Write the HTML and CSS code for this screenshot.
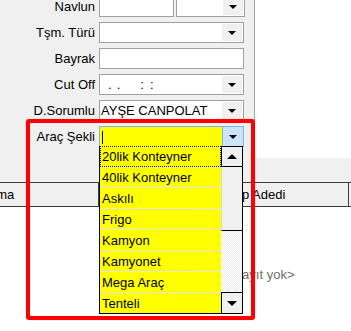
FILE: index.html
```html
<!DOCTYPE html>
<html lang="tr">
<head>
    <meta charset="UTF-8">
    <meta name="viewport" content="width=device-width, initial-scale=1.0">
    <title>Araç Şekli</title>
    <link rel="stylesheet" href="styles.css">
</head>
<body>
    <div class="top">
        <div class="panel">
            <div class="form">
                <div class="row">
                    <label>Navlun</label>
                    <div class="box box-short"></div>
                    <div class="box combo combo-short">
                        <span class="val"></span>
                        <span class="btn"><span class="arrow"></span></span>
                    </div>
                </div>

                <div class="row">
                    <label>Tşm. Türü</label>
                    <div class="box combo">
                        <span class="val"></span>
                        <span class="btn"><span class="arrow"></span></span>
                    </div>
                </div>

                <div class="row">
                    <label>Bayrak</label>
                    <div class="box box-wide"></div>
                </div>

                <div class="row">
                    <label>Cut Off</label>
                    <div class="box combo">
                        <span class="val mask"><span class="m1">.</span><span class="m2">.</span><span class="m3">:</span><span class="m4">:</span></span>
                        <span class="btn"><span class="arrow"></span></span>
                    </div>
                </div>

                <div class="row">
                    <label>D.Sorumlu</label>
                    <div class="box combo">
                        <span class="val">AYŞE CANPOLAT</span>
                        <span class="btn"><span class="arrow"></span></span>
                    </div>
                </div>

                <div class="row">
                    <label>Araç Şekli</label>
                    <div class="box combo combo-active">
                        <span class="val"><span class="caret"></span></span>
                        <span class="btn"><span class="arrow"></span></span>

                        <div class="dropdown">
                            <ul class="items">
                                <li class="focused">20lik Konteyner</li>
                                <li>40lik Konteyner</li>
                                <li>Askılı</li>
                                <li>Frigo</li>
                                <li>Kamyon</li>
                                <li>Kamyonet</li>
                                <li>Mega Araç</li>
                                <li>Tenteli</li>
                            </ul>
                            <div class="scrollbar">
                                <div class="sb-btn sb-up"><span class="arrow-up"></span></div>
                                <div class="sb-thumb"></div>
                                <div class="sb-track"></div>
                                <div class="sb-btn sb-down"><span class="arrow-dn"></span></div>
                            </div>
                        </div>
                    </div>
                </div>
            </div>
        </div>
        <div class="side"></div>
    </div>

    <div class="strip"></div>

    <div class="grid">
        <div class="grid-head">
            <div class="cell c1">Firma</div>
            <div class="cell c2"></div>
            <div class="cell c3">Kap Adedi</div>
            <div class="cell c4"></div>
        </div>
        <div class="grid-body">
            <span class="empty">&lt;kayıt yok&gt;</span>
        </div>
    </div>

    <div class="highlight"></div>
</body>
</html>
```

FILE: styles.css
```css
:root {
    --panel-bg: #f0f0f0;
    --field-border: #a0a0a0;
    --focus-border: #7eb4ea;
    --focus-btn: #cce4f7;
    --yellow: #ffff00;
}

* {
    box-sizing: border-box;
}

body {
    margin: 0;
    width: 351px;
    height: 331px;
    overflow: hidden;
    position: relative;
    background-color: #ffffff;
    color: #000000;
    font-family: "Liberation Sans", Arial, sans-serif;
    font-size: 13px;
}

/* top form area */
.top {
    display: flex;
    height: 158px;
}

.panel {
    width: 255px;
    background-color: var(--panel-bg);
    border-right: 1px solid #a3a3a3;
}

.side {
    flex: 1;
    background-color: #ffffff;
}

.form {
    display: flex;
    flex-direction: column;
    gap: 5px;
    margin-top: -4px;
}

.row {
    display: flex;
    align-items: center;
    gap: 4px;
    height: 21px;
}

label {
    width: 95px;
    text-align: right;
}

.box {
    height: 21px;
    border: 1px solid var(--field-border);
    background-color: #ffffff;
}

.box-short {
    width: 75px;
}

.box-wide {
    width: 145px;
}

.combo {
    position: relative;
    width: 145px;
    display: flex;
    align-items: center;
}

.combo-short {
    width: 69px;
    margin-left: -2px;
}

.val {
    flex: 1;
    padding-left: 1px;
    white-space: pre;
    overflow: hidden;
}

.btn {
    align-self: stretch;
    width: 20px;
    margin: 1px;
    background-color: var(--panel-bg);
    display: flex;
    align-items: center;
    justify-content: center;
}

.arrow {
    width: 0;
    height: 0;
    border-left: 4px solid transparent;
    border-right: 4px solid transparent;
    border-top: 4px solid #000000;
}

/* masked date field */
.mask span {
    display: inline-block;
}

.m1 { margin-left: 7px; }
.m2 { margin-left: 5px; }
.m3 { margin-left: 20px; }
.m4 { margin-left: 6px; }

/* focused yellow combo */
.combo-active {
    background-color: var(--yellow);
    border-color: var(--focus-border);
}

.combo-active .btn {
    margin: 0;
    width: 21px;
    background-color: var(--focus-btn);
    border-left: 1px solid var(--focus-border);
}

.caret {
    display: inline-block;
    width: 1px;
    height: 13px;
    margin-left: 1px;
    vertical-align: middle;
    background-color: #000000;
}

/* open drop-down list */
.dropdown {
    position: absolute;
    top: 100%;
    left: -1px;
    z-index: 2;
    width: 144px;
    display: flex;
    border: 1px solid #000000;
    border-top: none;
}

.items {
    list-style: none;
    margin: 0;
    padding: 0;
    width: 121px;
    background-color: var(--yellow);
}

.items li {
    height: 21px;
    line-height: 21px;
    padding-left: 2px;
    border-bottom: 1px solid #e6e6e6;
    white-space: nowrap;
}

.items li:last-child {
    border-bottom: none;
    height: 20px;
}

.items li.focused {
    outline: 1px dotted #0a24a0;
    outline-offset: -1px;
}

.scrollbar {
    width: 21px;
    display: flex;
    flex-direction: column;
}

.sb-btn {
    height: 21px;
    background-color: var(--panel-bg);
    border: 1px solid #000000;
    border-right: none;
    display: flex;
    align-items: center;
    justify-content: center;
}

.sb-down {
    border-bottom: none;
    height: 21px;
}

.arrow-up,
.arrow-dn {
    width: 0;
    height: 0;
    border-left: 5px solid transparent;
    border-right: 5px solid transparent;
}

.arrow-up {
    border-bottom: 5px solid #000000;
}

.arrow-dn {
    border-top: 5px solid #000000;
}

.sb-thumb {
    height: 64px;
    background-color: var(--panel-bg);
    border-left: 1px solid #d8d8d8;
    border-bottom: 1px solid #000000;
}

.sb-track {
    flex: 1;
    background: repeating-conic-gradient(#ececec 0 25%, #ffffff 0 50%) 0 0 / 2px 2px;
}

/* strip between form and grid */
.strip {
    height: 24px;
    background-color: var(--panel-bg);
}

/* grid */
.grid-head {
    display: flex;
    height: 25px;
    background-color: var(--panel-bg);
    border-top: 1px solid #3c3c3c;
    border-bottom: 1px solid #3c3c3c;
}

.cell {
    line-height: 23px;
    white-space: nowrap;
    overflow: hidden;
    border-right: 1px solid #3c3c3c;
}

.c1 {
    width: 99px;
    text-indent: -19px;
}

.c2 {
    width: 125px;
}

.c3 {
    width: 125px;
    padding-left: 2px;
}

.c4 {
    flex: 1;
    border-right: none;
}

.grid-body {
    height: 124px;
    padding: 60px 0 0 228px;
    background-color: #ffffff;
}

.empty {
    color: #6d6d6d;
}

/* red annotation frame */
.highlight {
    position: absolute;
    left: 26px;
    top: 119px;
    width: 229px;
    height: 201px;
    z-index: 3;
    border: 4px solid #ff0000;
    border-radius: 3px;
    box-shadow: 0 0 1px rgba(255, 0, 0, 0.5);
}
```
